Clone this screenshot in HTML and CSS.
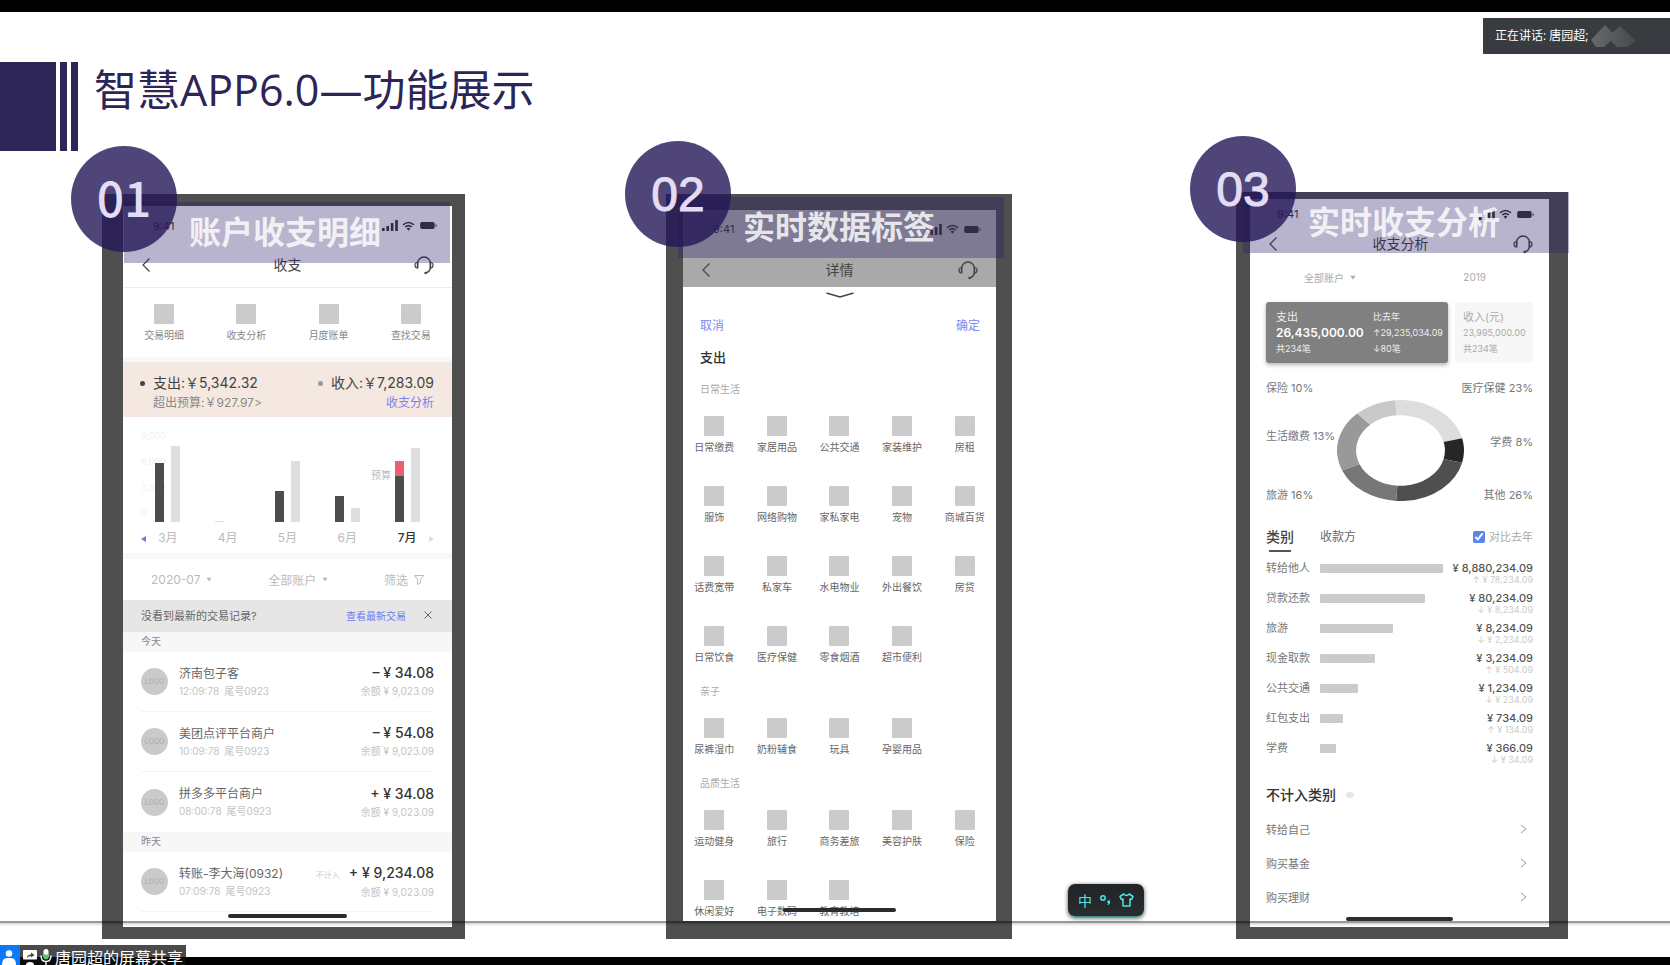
FILE: index.html
```html
<!DOCTYPE html>
<html lang="zh-CN">
<head>
<meta charset="utf-8">
<title>智慧APP6.0—功能展示</title>
<link rel="stylesheet" href="styles.css">
</head>
<body>
<svg class="defs" aria-hidden="true">
  <symbol id="signal" viewBox="0 0 16 11"><path d="M0 8h2.6v3H0zM4.4 6H7v5H4.400zM8.800 3h2.600v8H8.800zM13.200 0h2.600v11h-2.600z"/></symbol>
  <symbol id="wifi" viewBox="0 0 14 11"><path d="M1 4.200Q7-1 13 4.200M3.300 6.600Q7 3.600 10.700 6.600" fill="none" stroke="currentColor" stroke-width="1.700"/><path d="M4.900 8.300Q7 6.800 9.100 8.300L7 10.800z"/></symbol>
  <symbol id="battery" viewBox="0 0 19 8"><rect width="16.500" height="8" rx="2"/><rect x="17.500" y="2.500" width="1.200" height="3" rx=".6"/></symbol>
  <symbol id="back" viewBox="0 0 10 16"><path d="M8.500 1.500 2 8l6.500 6.500" fill="none" stroke="currentColor" stroke-width="1.200"/></symbol>
  <symbol id="next" viewBox="0 0 7 10"><path d="M1 1l5 4-5 4" fill="none" stroke="currentColor"/></symbol>
  <symbol id="headset" viewBox="0 0 20 20"><path d="M3.500 12V8.500a6.500 6.500 0 0 1 13 0V12q0 4.500-5 6" fill="none" stroke="currentColor" stroke-width="1.400"/><path d="M3.800 7.500v5.500Q1 13 1 10.200T3.800 7.500zM16.200 7.500v5.500q2.800 0 2.800-2.800t-2.800-2.700z" fill="none" stroke="currentColor" stroke-width="1.200"/><circle cx="11.500" cy="18" r="1.200"/></symbol>
  <symbol id="down" viewBox="0 0 8 6"><path d="M.5.5h7L4 5.500z"/></symbol>
</svg>

<div class="topbar"></div>

<header class="heading">
  <div class="stripes"><i class="stripe wide"></i><i class="stripe"></i><i class="stripe"></i></div>
  <h1>智慧APP6.0—功能展示</h1>
</header>

<aside class="speaking">
  <span>正在讲话: 唐园超;</span>
  <svg width="46" height="26" viewBox="0 0 46 26"><defs><linearGradient id="fade" x1="0" x2="1"><stop offset="0" stop-color="#686b6e"/><stop offset="1" stop-color="#45494c"/></linearGradient></defs><path d="M0 17 14 2 25 13 13 24H5zM16 14 29 3 45 18 36 24H26z" fill="url(#fade)"/></svg>
</aside>

<main class="phones">
  <section class="phone first">
    <div class="screen">
      <div class="status"><span>9:41</span><svg class="i-signal"><use href="#signal"/></svg><svg class="i-wifi"><use href="#wifi"/></svg><svg class="i-battery"><use href="#battery"/></svg></div>
      <nav class="nav"><button aria-label="返回"><svg class="i-back"><use href="#back"/></svg></button><h2>收支</h2><button aria-label="客服"><svg class="i-headset"><use href="#headset"/></svg></button></nav>
      <div class="shortcuts">
        <button class="tile"><i></i>交易明细</button><button class="tile"><i></i>收支分析</button><button class="tile"><i></i>月度账单</button><button class="tile"><i></i>查找交易</button>
      </div>
      <div class="summary">
        <div class="line"><span class="dot">支出:￥5,342.32</span><span class="dot pale">收入:￥7,283.09</span></div>
        <div class="line small"><span>超出预算:￥927.97&gt;</span><a href="#analysis">收支分析</a></div>
      </div>
      <div class="chart">
        <div class="axis"><span>9,000</span><span>6,000</span><span>3,000</span><span>0</span></div>
        <div class="plot">
          <div class="pair"><i style="height:59px"></i><i class="light" style="height:76px"></i></div>
          <div class="pair"><i class="light" style="height:1px"></i><i class="light" style="height:0px"></i></div>
          <div class="pair"><i style="height:31px"></i><i class="light" style="height:61px"></i></div>
          <div class="pair"><i style="height:26px"></i><i class="light" style="height:14px"></i></div>
          <div class="pair"><span class="budget">预算</span><i class="over" style="height:61px"></i><i class="light" style="height:74px"></i></div>
        </div>
        <div class="months"><span>3月</span><span>4月</span><span>5月</span><span>6月</span><b>7月</b></div>
        <button class="page prev" aria-label="上一页"></button><button class="page following" aria-label="下一页"></button>
      </div>
      <div class="filters"><button>2020-07<svg class="i-down"><use href="#down"/></svg></button><button>全部账户<svg class="i-down"><use href="#down"/></svg></button><button>筛选<svg class="i-funnel" viewBox="0 0 10 10"><path d="M.5.500h9L6.500 4.500v3.500l-3 1.500V4.500z" fill="none" stroke="currentColor"/></svg></button></div>
      <div class="notice"><span>没看到最新的交易记录?</span><a href="#latest">查看最新交易</a><button aria-label="关闭"><svg class="i-close" viewBox="0 0 8 8"><path d="M.5.500l7 7m0-7l-7 7" stroke="currentColor"/></svg></button></div>
      <h3 class="day">今天</h3>
      <article class="deal"><i class="avatar">LOGO</i><div class="who">济南包子客<small>12:09:78&ensp;尾号0923</small></div><div class="sum"><b>– ¥ 34.08</b><small>余额 ¥ 9,023.09</small></div></article>
      <article class="deal"><i class="avatar">LOGO</i><div class="who">美团点评平台商户<small>10:09:78&ensp;尾号0923</small></div><div class="sum"><b>– ¥ 54.08</b><small>余额 ¥ 9,023.09</small></div></article>
      <article class="deal last"><i class="avatar">LOGO</i><div class="who">拼多多平台商户<small>08:00:78&ensp;尾号0923</small></div><div class="sum"><b>+ ¥ 34.08</b><small>余额 ¥ 9,023.09</small></div></article>
      <h3 class="day">昨天</h3>
      <article class="deal"><i class="avatar">LOGO</i><div class="who">转账-李大海(0932)<small>07:09:78&ensp;尾号0923</small></div><div class="sum"><b><em>不计入</em>+ ¥ 9,234.08</b><small>余额 ¥ 9,023.09</small></div></article>
      <i class="home"></i>
    </div>
    <div class="tag"><div class="band"></div><div class="disc">01</div><strong>账户收支明细</strong></div>
  </section>

  <section class="phone second">
    <div class="screen">
      <div class="shade">
        <div class="status"><span>9:41</span><svg class="i-signal"><use href="#signal"/></svg><svg class="i-wifi"><use href="#wifi"/></svg><svg class="i-battery"><use href="#battery"/></svg></div>
        <nav class="nav"><button aria-label="返回"><svg class="i-back"><use href="#back"/></svg></button><h2>详情</h2><button aria-label="客服"><svg class="i-headset"><use href="#headset"/></svg></button></nav>
      </div>
      <svg class="handle" viewBox="0 0 28 6"><path d="M.5 1 14 5 27.500 1" fill="none" stroke="#444" stroke-width="1.500"/></svg>
      <div class="actions"><button>取消</button><button>确定</button></div>
      <h3 class="kind">支出</h3>
      <h4>日常生活</h4>
      <div class="tiles">
        <button class="tile"><i></i>日常缴费</button><button class="tile"><i></i>家居用品</button><button class="tile"><i></i>公共交通</button><button class="tile"><i></i>家装维护</button><button class="tile"><i></i>房租</button>
        <button class="tile"><i></i>服饰</button><button class="tile"><i></i>网络购物</button><button class="tile"><i></i>家私家电</button><button class="tile"><i></i>宠物</button><button class="tile"><i></i>商城百货</button>
        <button class="tile"><i></i>话费宽带</button><button class="tile"><i></i>私家车</button><button class="tile"><i></i>水电物业</button><button class="tile"><i></i>外出餐饮</button><button class="tile"><i></i>房贷</button>
        <button class="tile"><i></i>日常饮食</button><button class="tile"><i></i>医疗保健</button><button class="tile"><i></i>零食烟酒</button><button class="tile"><i></i>超市便利</button>
      </div>
      <h4>亲子</h4>
      <div class="tiles">
        <button class="tile"><i></i>尿裤湿巾</button><button class="tile"><i></i>奶粉辅食</button><button class="tile"><i></i>玩具</button><button class="tile"><i></i>孕婴用品</button>
      </div>
      <h4>品质生活</h4>
      <div class="tiles">
        <button class="tile"><i></i>运动健身</button><button class="tile"><i></i>旅行</button><button class="tile"><i></i>商务差旅</button><button class="tile"><i></i>美容护肤</button><button class="tile"><i></i>保险</button>
        <button class="tile"><i></i>休闲爱好</button><button class="tile"><i></i>电子数码</button><button class="tile"><i></i>教育教培</button>
      </div>
      <i class="home"></i>
    </div>
    <div class="tag"><div class="band"></div><div class="disc">02</div><strong>实时数据标签</strong></div>
  </section>

  <section class="phone third">
    <div class="screen">
      <div class="status"><span>9:41</span><svg class="i-signal"><use href="#signal"/></svg><svg class="i-wifi"><use href="#wifi"/></svg><svg class="i-battery"><use href="#battery"/></svg></div>
      <nav class="nav"><button aria-label="返回"><svg class="i-back"><use href="#back"/></svg></button><h2>收支分析</h2><button aria-label="客服"><svg class="i-headset"><use href="#headset"/></svg></button></nav>
      <div class="picker"><button>全部账户<svg class="i-down"><use href="#down"/></svg></button><button>2019</button></div>
      <div class="cards">
        <div class="card dark"><div><span>支出</span><b>26,435,000.00</b><small>共234笔</small></div><div><small>比去年</small><small>↑29,235,034.09</small><small>↓80笔</small></div></div>
        <div class="card"><div><span>收入(元)</span><small>23,995,000.00</small><small>共234笔</small></div></div>
      </div>
      <div class="share">
        <ul><li>保险 10%</li><li class="raised">生活缴费 13%</li><li>旅游 16%</li></ul>
        <svg class="ring" viewBox="0 0 200 200" preserveAspectRatio="none"><g fill="none" stroke-width="30" transform="rotate(-95 100 100)">
          <circle cx="100" cy="100" r="85" pathLength="360" stroke="#dedede" stroke-dasharray="81 279"/>
          <circle cx="100" cy="100" r="85" pathLength="360" stroke="#262626" stroke-dasharray="28 332" stroke-dashoffset="-81"/>
          <circle cx="100" cy="100" r="85" pathLength="360" stroke="#4f4f4f" stroke-dasharray="80 280" stroke-dashoffset="-109"/>
          <circle cx="100" cy="100" r="85" pathLength="360" stroke="#777" stroke-dasharray="63 297" stroke-dashoffset="-189"/>
          <circle cx="100" cy="100" r="85" pathLength="360" stroke="#999" stroke-dasharray="70 290" stroke-dashoffset="-252"/>
          <circle cx="100" cy="100" r="85" pathLength="360" stroke="#c9c9c9" stroke-dasharray="38 322" stroke-dashoffset="-322"/>
        </g></svg>
        <ul class="right"><li>医疗保健 23%</li><li>学费 8%</li><li>其他 26%</li></ul>
      </div>
      <div class="tabs"><button class="on">类别</button><button>收款方</button><label><input type="checkbox" checked>对比去年</label></div>
      <div class="ranks">
        <div class="rank"><span>转给他人</span><i style="width:123px"></i><div>¥ 8,880,234.09<small>↑ ¥ 78,234.09</small></div></div>
        <div class="rank"><span>贷款还款</span><i style="width:105px"></i><div>¥ 80,234.09<small>↓ ¥ 8,234.09</small></div></div>
        <div class="rank"><span>旅游</span><i style="width:73px"></i><div>¥ 8,234.09<small>↓ ¥ 2,234.09</small></div></div>
        <div class="rank"><span>现金取款</span><i style="width:55px"></i><div>¥ 3,234.09<small>↑ ¥ 504.09</small></div></div>
        <div class="rank"><span>公共交通</span><i style="width:38px"></i><div>¥ 1,234.09<small>↓ ¥ 234.09</small></div></div>
        <div class="rank"><span>红包支出</span><i style="width:23px"></i><div>¥ 734.09<small>↑ ¥ 134.09</small></div></div>
        <div class="rank"><span>学费</span><i style="width:16px"></i><div>¥ 366.09<small>↓ ¥ 34.09</small></div></div>
      </div>
      <h3 class="excluded">不计入类别<i></i></h3>
      <a class="entry" href="#self">转给自己<svg class="i-next"><use href="#next"/></svg></a>
      <a class="entry" href="#fund">购买基金<svg class="i-next"><use href="#next"/></svg></a>
      <a class="entry" href="#wealth">购买理财<svg class="i-next"><use href="#next"/></svg></a>
      <i class="home"></i>
    </div>
    <div class="tag"><div class="band"></div><div class="disc">03</div><strong>实时收支分析</strong></div>
  </section>
</main>

<div class="rule"></div>
<div class="bottombar"></div>

<div class="ime">
  <span>中</span>
  <svg width="11" height="12" viewBox="0 0 11 12"><circle cx="3" cy="4" r="2.200" fill="none" stroke="#4fe3e3" stroke-width="1.500"/><path d="M7.500 6.500h2.500v2.500L8.500 11h-1l.7-2h-.7z" fill="#4fe3e3"/></svg>
  <svg width="15" height="14" viewBox="0 0 15 14"><path d="M4.800 1 1 3.500 2.300 6.500 4 6v7h7V6l1.700.5L14 3.500 10.200 1Q7.500 4 4.800 1z" fill="none" stroke="#4fe3e3" stroke-width="1.500" stroke-linejoin="round"/></svg>
</div>

<footer class="sharing">
  <svg class="person" viewBox="0 0 20 20"><rect width="20" height="20" fill="#0b78f6"/><circle cx="9" cy="8.500" r="3.300" fill="#fff"/><path d="M2 20q0-7 5-7h4q5 0 5 7z" fill="#fff"/></svg>
  <svg class="present" viewBox="0 0 14 16"><rect y="1" width="14" height="9.500" rx="1" fill="#fff"/><path d="M4 9q0-3.500 4-3.500V3.500L11.500 6 8 8.500V7Q5.500 7 4 9z" fill="#444"/><path d="M3 16q0-3 4-3t4 3z" fill="#fff"/></svg>
  <svg class="mic" viewBox="0 0 12 16"><rect x="3.500" width="5" height="10" rx="2.500" fill="#fff"/><path d="M3.500 5.500h5V8q0 2.500-2.500 2.500T3.500 8z" fill="#5ac46a"/><path d="M1 6.500q0 6 5 6t5-6M6 12.500V16" fill="none" stroke="#fff" stroke-width="1.400"/></svg>
  <span>唐园超的屏幕共享</span>
</footer>
</body>
</html>
```

FILE: styles.css
```css
* { box-sizing: border-box; }
html, body { height: 100%; }
body {
  margin: 0;
  background: #fff;
  overflow: hidden;
  position: relative;
  font-family: Inter, "Noto Sans CJK SC", sans-serif;
  color: #555;
}
h1, h2, h3, h4, ul { margin: 0; padding: 0; font-weight: 400; list-style: none; }
button { border: 0; background: none; padding: 0; font: inherit; color: inherit; display: flex; align-items: center; }
a { color: #7f7ff0; text-decoration: none; }
svg { fill: currentColor; display: block; flex: none; }
small { font-size: 10px; }
.defs { position: absolute; width: 0; height: 0; }

.topbar { height: 12px; background: #000; }
.heading { display: flex; align-items: flex-start; gap: 16px; padding-top: 50px; }
.stripes { display: flex; gap: 4px; height: 89px; }
.stripe { width: 7px; background: #2d2555; }
.stripe.wide { width: 56px; }
h1 { font: 43px/56px "Open Sans", "Noto Sans CJK SC", sans-serif; color: #2d2555; }

.speaking {
  position: absolute; top: 18px; right: 0; width: 187px; height: 36px;
  display: flex; align-items: center; gap: 3px; padding-left: 12px;
  background: #383c40; color: #fff;
  font: 12px/20px "Open Sans", "Noto Sans CJK SC", sans-serif;
}

.phones {
  display: grid;
  grid-template-columns: 363fr 201fr 346fr 224fr 332fr;
  padding: 43px 102px 0;
}
.phone { position: relative; background: #4f4f4f; }
.first { grid-column: 1; padding: 12px 13px 12px 21px; }
.second { grid-column: 3; padding: 16px 16px 18px 17px; }
.third { grid-column: 5; margin-top: -2px; padding: 7px 19px 12px 14px; }
.screen { position: relative; height: 100%; background: #fff; }
.home { position: absolute; left: 32%; right: 32%; bottom: 9px; height: 4px; border-radius: 2px; background: #2c2c2c; }
.third .home { bottom: 6px; }

.tag { position: absolute; width: 379px; height: 117px; top: -48px; left: -31px; }
.second .tag { top: -53px; left: -41px; }
.third .tag { top: -56px; left: -46px; }
.band { position: absolute; left: 53px; right: 0; top: 56px; bottom: 0; background: rgba(43, 31, 105, .335); }
.disc {
  position: absolute; left: 0; top: 0; width: 106px; height: 106px; border-radius: 50%;
  background: rgba(36, 22, 88, .8); color: #e2ddf3;
  font: 48px/108px "Liberation Sans", sans-serif; text-align: center;
  -webkit-text-stroke: 1px #e2ddf3;
}
.first .disc { font: 500 48px/100px "Noto Sans CJK SC", sans-serif; -webkit-text-stroke: 0; }
.tag strong {
  position: absolute; left: 118px; top: 62px; white-space: nowrap;
  font: 700 32px/44px "Noto Sans CJK SC", sans-serif; color: rgba(255, 255, 255, .84);
}

.status { display: flex; align-items: center; height: 39px; padding: 0 14px 0 30px; gap: 4px; font-size: 11px; color: #333; }
.status span { flex: 1; }
.i-signal { width: 16px; height: 11px; }
.i-wifi { width: 13px; height: 10px; }
.i-battery { width: 19px; height: 7px; }
.nav { display: flex; align-items: center; justify-content: space-between; height: 43px; padding: 0 18px; color: #444; }
.nav button { width: 20px; }
.nav h2 { font-size: 14px; line-height: 20px; }
.i-back { width: 10px; height: 16px; }
.i-headset { width: 20px; height: 20px; }
.i-down { width: 6px; height: 5px; }
.i-funnel { width: 10px; height: 10px; }
.i-close { width: 8px; height: 8px; }
.i-next { width: 7px; height: 10px; color: #999; }

.tile { flex-direction: column; gap: 4px; font-size: 10px; line-height: 14px; color: #666; white-space: nowrap; }
.tile i { width: 20px; height: 20px; border-radius: 1px; background: #cbcbcb; }

.first .nav { padding-bottom: 2px; border-bottom: 1px solid #eee; }
.shortcuts { display: grid; grid-template-columns: repeat(4, 1fr); padding: 16px 0 15px; border-bottom: 5px solid #f8f7f6; }
.shortcuts .tile { color: #888; }
.summary { padding: 11px 18px 4px 30px; background: #f4e8e0; }
.line { display: flex; justify-content: space-between; font-size: 14px; line-height: 20px; color: #444; }
.small { font-size: 12px; color: #888; }
.dot { position: relative; }
.dot::before { content: ""; position: absolute; left: -13px; top: 8px; width: 5px; height: 5px; border-radius: 50%; background: #444; }
.dot.pale::before { background: #999; }

.chart { position: relative; padding: 0 15px 5px; border-bottom: 6px solid #f8f8f8; }
.axis { position: absolute; left: 18px; top: 13px; display: flex; flex-direction: column; gap: 14px; font-size: 9px; line-height: 12px; color: #f1f1f1; }
.plot, .months { display: grid; grid-template-columns: repeat(5, 1fr); position: relative; }
.plot { height: 105px; align-items: end; }
.pair { position: relative; display: flex; justify-content: center; align-items: flex-end; gap: 7px; }
.pair i { width: 9px; background: #4d4d4d; }
.pair .light { background: #dedede; }
.pair .over { background: linear-gradient(#eb6173 15px, #4d4d4d 15px); }
.budget { position: absolute; right: 46px; bottom: 40px; font-size: 10px; line-height: 14px; color: #bbb; white-space: nowrap; }
.months { margin-top: 6px; font-size: 12px; line-height: 20px; text-align: center; color: #bbb; }
.months b { color: #333; font-weight: 500; }
.page { position: absolute; bottom: 11px; width: 5px; height: 6px; background: #7375e8; clip-path: polygon(0 50%, 100% 0, 100% 100%); }
.prev { left: 18px; }
.following { right: 18px; background: #ddd; transform: rotate(180deg); }

.filters { display: flex; justify-content: space-between; height: 41px; padding: 0 28px; font-size: 12px; color: #bbb; }
.filters button { gap: 6px; }
.notice { display: flex; align-items: center; height: 32px; padding: 0 20px 2px 18px; background: #e6e6e6; font-size: 11px; color: #666; }
.notice span { flex: 1; }
.notice a { margin-right: 18px; font-size: 10px; color: #6c7df2; }
.day { height: 20px; padding-left: 18px; background: #f7f7f7; font-size: 10px; line-height: 18px; color: #888; }
.deal { display: flex; align-items: center; height: 60px; margin: 0 18px; border-bottom: 1px solid #f4f4f4; font-size: 12px; line-height: 18px; color: #666; }
.deal.last { border: 0; }
.avatar { width: 27px; height: 27px; margin-right: 11px; border-radius: 50%; background: #cacaca; color: #aaa; font: 7px/27px Inter, sans-serif; text-align: center; }
.who { flex: 1; }
.deal small { display: block; line-height: 16px; color: #c4c4c4; }
.sum { text-align: right; }
.sum b { font-size: 14px; font-weight: 500; color: #333; white-space: nowrap; }
.sum em { margin-right: 9px; font-size: 8px; font-style: normal; font-weight: 400; color: #ccc; }

.shade { background: #a9a9a9; }
.second .status { height: 38px; }
.second .nav { height: 39px; padding-top: 4px; }
.handle { width: 28px; height: 6px; margin: 5px auto 0; }
.actions { display: flex; justify-content: space-between; padding: 18px 16px 0 17px; font-size: 12px; line-height: 20px; color: #7f86f0; }
.kind { padding: 11px 17px 0; font-size: 13px; line-height: 20px; color: #333; font-weight: 500; }
h4 { padding: 0 17px; margin: 20px 0; font-size: 10px; line-height: 14px; color: #aaa; }
.kind + h4 { margin-top: 15px; }
.tiles { display: grid; grid-template-columns: repeat(5, 1fr); row-gap: 32px; }

.third .status { height: 30px; padding-left: 27px; }
.third .nav { height: 32px; padding-right: 16px; padding-bottom: 2px; }
.picker { display: flex; justify-content: space-between; height: 32px; padding: 0 63px 0 54px; font-size: 10px; color: #aaa; }
.picker button { gap: 6px; }
.cards { display: flex; gap: 7px; margin: 9px 16px 0; }
.card { flex: 76; height: 61px; padding: 7px 4px 7px 8px; border-radius: 3px; background: #f7f7f7; color: #aaa; white-space: nowrap; }
.card.dark { flex: 192; display: flex; justify-content: space-between; padding: 7px 5px 7px 10px; background: #808080; color: #eee; box-shadow: 0 2px 4px rgba(0, 0, 0, .3); }
.card span, .card b, .card small { display: block; line-height: 16px; }
.card small { font-size: 9px; }
.card span { font-size: 11px; }
.card b { font-size: 12px; font-weight: 600; color: #fff; }

.share { display: grid; grid-template-columns: minmax(0, 71fr) minmax(0, 127fr) minmax(0, 69fr); height: 123px; margin: 17px 16px 0; font-size: 11px; line-height: 16px; color: #777; }
.share ul { display: flex; flex-direction: column; justify-content: space-between; white-space: nowrap; }
.share .right { align-items: flex-end; }
.share .raised { padding-bottom: 12px; }
.ring { width: 100%; height: 101px; margin-top: 20px; }
.tabs { display: flex; align-items: center; gap: 26px; margin: 24px 16px 0; font-size: 12px; line-height: 20px; color: #666; }
.tabs .on { position: relative; font-size: 14px; font-weight: 500; color: #444; }
.tabs .on::after { content: ""; position: absolute; left: 3px; right: 3px; bottom: 0; height: 2px; background: #555; }
.tabs button { padding-bottom: 5px; }
.tabs label { display: flex; align-items: center; gap: 4px; margin-left: auto; padding-bottom: 5px; font-size: 11px; color: #aaa; }
.tabs input { width: 12px; height: 12px; margin: 0; accent-color: #5c83f0; }
.ranks { margin: 9px 16px 0; }
.rank { display: flex; align-items: flex-start; height: 30px; font-size: 11px; line-height: 14px; color: #777; white-space: nowrap; }
.rank span { width: 54px; }
.rank i { height: 9px; margin-top: 3px; border-radius: 1px; background: #cbcbcb; }
.rank div { margin-left: auto; text-align: right; color: #555; font-weight: 500; }
.rank small { display: block; font-size: 9px; line-height: 9px; font-weight: 400; color: #ccc; }
.excluded { display: flex; align-items: center; gap: 10px; margin: 14px 16px 7px; font-size: 14px; line-height: 20px; font-weight: 500; color: #333; }
.excluded i { width: 8px; height: 6px; border-radius: 50%; background: #e6e6e6; }
.entry { display: flex; align-items: center; justify-content: space-between; height: 34px; padding: 0 22px 0 16px; font-size: 11px; color: #777; }
.third .screen { padding-bottom: 13px; }

.rule { position: absolute; left: 0; right: 0; bottom: 39px; height: 5px; background: linear-gradient(rgba(0, 0, 0, .4) 2px, rgba(0, 0, 0, .18) 2px, rgba(0, 0, 0, 0)); }
.bottombar { position: absolute; left: 0; right: 0; bottom: 0; height: 8px; background: #000; }

.ime {
  position: absolute; right: 526px; bottom: 48px; width: 76px; height: 33px;
  display: flex; align-items: center; justify-content: center; gap: 8px;
  border-radius: 7px; background: linear-gradient(#1f2426, #2a2d2f);
  border-bottom: 1px solid #3f8c8c; box-shadow: 0 1px 4px rgba(0, 0, 0, .7);
  color: #4fe3e3; font: 14px/20px "Noto Sans CJK SC", sans-serif;
}
.sharing {
  position: absolute; left: 0; bottom: 0; width: 186px; height: 20px; overflow: hidden;
  display: flex; align-items: flex-start; gap: 3px; background: linear-gradient(#4a4a4a 12px, #0c0c0c 12px);
  color: #fff; font: 16px/24px "Noto Sans CJK SC", sans-serif; white-space: nowrap;
}
.person { width: 20px; height: 20px; }
.present { width: 14px; height: 16px; margin-top: 4px; }
.mic { width: 12px; height: 16px; margin-top: 4px; }
```
